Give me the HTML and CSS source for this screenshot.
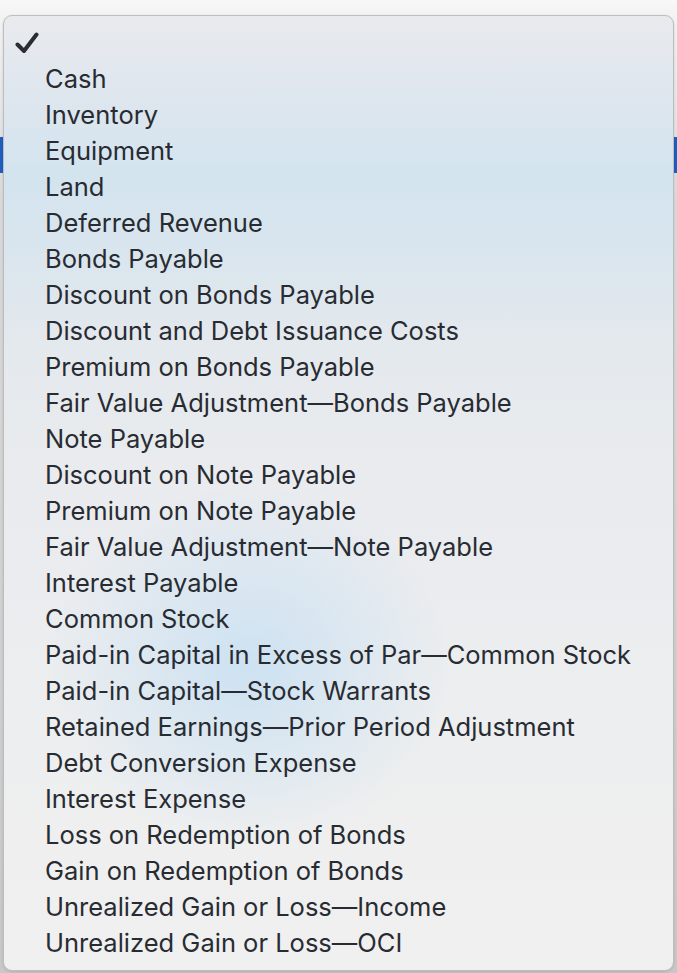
FILE: index.html
```html
<!DOCTYPE html>
<html lang="en">
<head>
<meta charset="utf-8">
<title>Account menu</title>
<link rel="stylesheet" href="styles.css">
</head>
<body>
<div class="backdrop">
  <ul class="menu">
    <li class="item checked"><svg class="check" width="24" height="24" viewBox="0 0 24 24"><path d="M2.5 13.5 L9 20 L21.5 3.5" fill="none" stroke="#2a2d31" stroke-width="4" stroke-linecap="round" stroke-linejoin="round"/></svg></li>
    <li class="item">Cash</li>
    <li class="item">Inventory</li>
    <li class="item">Equipment</li>
    <li class="item">Land</li>
    <li class="item">Deferred Revenue</li>
    <li class="item">Bonds Payable</li>
    <li class="item">Discount on Bonds Payable</li>
    <li class="item">Discount and Debt Issuance Costs</li>
    <li class="item">Premium on Bonds Payable</li>
    <li class="item">Fair Value Adjustment—Bonds Payable</li>
    <li class="item">Note Payable</li>
    <li class="item">Discount on Note Payable</li>
    <li class="item">Premium on Note Payable</li>
    <li class="item">Fair Value Adjustment—Note Payable</li>
    <li class="item">Interest Payable</li>
    <li class="item">Common Stock</li>
    <li class="item">Paid-in Capital in Excess of Par—Common Stock</li>
    <li class="item">Paid-in Capital—Stock Warrants</li>
    <li class="item">Retained Earnings—Prior Period Adjustment</li>
    <li class="item">Debt Conversion Expense</li>
    <li class="item">Interest Expense</li>
    <li class="item">Loss on Redemption of Bonds</li>
    <li class="item">Gain on Redemption of Bonds</li>
    <li class="item">Unrealized Gain or Loss—Income</li>
    <li class="item">Unrealized Gain or Loss—OCI</li>
  </ul>
</div>
</body>
</html>
```

FILE: styles.css
```css
html, body {
  margin: 0;
  padding: 0;
}
body {
  width: 677px;
  height: 973px;
  overflow: hidden;
  background:
    linear-gradient(to bottom, transparent 137px, #1f5fc0 137px, #1f5fc0 173px, transparent 173px),
    linear-gradient(to bottom, #f8f8f8 0px, #f3f3f3 15px, #dadada 200px, #d2d2d2 600px, #c8c8c8 973px);
}
.backdrop {
  padding: 15px 3px 3px 3px;
}
.menu {
  list-style: none;
  margin: 0;
  padding: 9px 0 9px 0;
  width: 671px;
  box-sizing: border-box;
  border: 1px solid #bdbdbf;
  border-radius: 9px;
  box-shadow: 0 1px 3px rgba(0,0,0,0.12);
  background:
    radial-gradient(ellipse 200px 180px at 245px 650px, rgba(203,225,242,0.95), rgba(203,225,242,0) 100%),
    linear-gradient(to bottom,
      #e9eaee 0px,
      #dde6ee 90px,
      #d3e4ef 160px,
      #d9e5ee 230px,
      #e4e9ed 330px,
      #e9ebee 450px,
      #eaecef 560px,
      #eceeef 700px,
      #efefef 820px,
      #f0f0f0 955px);
  font-family: Inter, "Noto Sans", sans-serif;
  font-size: 25.5px;
  color: #282c32;
}
.item {
  height: 36px;
  line-height: 36px;
  padding-left: 41px;
  white-space: nowrap;
}
.checked {
  position: relative;
}
.check {
  position: absolute;
  left: 11px;
  top: 6px;
}
```
